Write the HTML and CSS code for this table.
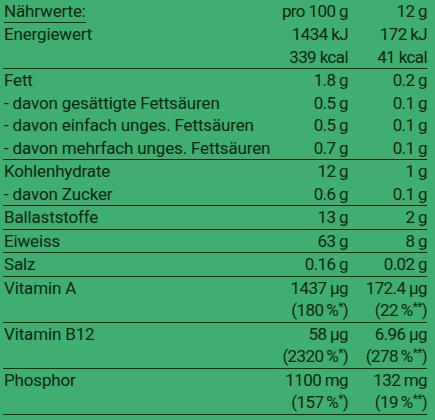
FILE: index.html
```html
<!DOCTYPE html>
<html lang="de">
<head>
<meta charset="utf-8">
<title>Nährwerte</title>
<link rel="stylesheet" href="styles.css">
</head>
<body>
<table class="nutri">
  <colgroup>
    <col class="c-name">
    <col class="c-100">
    <col class="c-portion">
  </colgroup>
  <tbody class="head">
    <tr><td><span class="title">Nährwerte:</span></td><td>pro 100 g</td><td>12 g</td></tr>
    <tr><td>Energiewert</td><td>1434 kJ<br>339 kcal</td><td>172 kJ<br>41 kcal</td></tr>
  </tbody>
  <tbody>
    <tr><td>Fett</td><td>1.8 g</td><td>0.2 g</td></tr>
    <tr><td>- davon gesättigte Fettsäuren</td><td>0.5 g</td><td>0.1 g</td></tr>
    <tr><td>- davon einfach unges. Fettsäuren</td><td>0.5 g</td><td>0.1 g</td></tr>
    <tr><td>- davon mehrfach unges. Fettsäuren</td><td>0.7 g</td><td>0.1 g</td></tr>
  </tbody>
  <tbody>
    <tr><td>Kohlenhydrate</td><td>12 g</td><td>1 g</td></tr>
    <tr><td>- davon Zucker</td><td>0.6 g</td><td>0.1 g</td></tr>
  </tbody>
  <tbody>
    <tr><td>Ballaststoffe</td><td>13 g</td><td>2 g</td></tr>
  </tbody>
  <tbody>
    <tr><td>Eiweiss</td><td>63 g</td><td>8 g</td></tr>
  </tbody>
  <tbody>
    <tr><td>Salz</td><td>0.16 g</td><td>0.02 g</td></tr>
  </tbody>
  <tbody>
    <tr><td>Vitamin A</td><td>1437 µg<br>(180&#8201;%<sup>*</sup>)</td><td>172.4 µg<br>(22&#8201;%<sup>**</sup>)</td></tr>
  </tbody>
  <tbody>
    <tr><td>Vitamin B12</td><td>58 µg<br>(2320&#8201;%<sup>*</sup>)</td><td>6.96 µg<br>(278&#8201;%<sup>**</sup>)</td></tr>
  </tbody>
  <tbody>
    <tr><td>Phosphor</td><td>1100 mg<br>(157&#8201;%<sup>*</sup>)</td><td>132 mg<br>(19&#8201;%<sup>**</sup>)</td></tr>
  </tbody>
</table>
</body>
</html>
```

FILE: styles.css
```css
html, body {
  margin: 0;
  padding: 0;
  background: #3fae6e;
}

body {
  padding: 0 8px 0 3px;
  color: #0b2614;
  font-family: Roboto, "Liberation Sans", sans-serif;
  font-size: 17px;
  letter-spacing: -0.15px;
}

.nutri {
  width: 424px;
  table-layout: fixed;
  border-collapse: collapse;
}

.c-name { width: 267px; }
.c-100 { width: 78px; }
.c-portion { width: 79px; }

.nutri td {
  padding: 0;
  line-height: 22.5px;
  vertical-align: top;
  white-space: nowrap;
}

.nutri td:first-child {
  padding-left: 1px;
}

.nutri td + td {
  text-align: right;
  letter-spacing: -0.6px;
}

.nutri tbody {
  border-bottom: 1px solid #0b2614;
}

.title {
  display: inline-block;
  line-height: 22px;
  border-bottom: 1px solid #0b2614;
}

sup {
  font-size: 0.7em;
  line-height: 0;
  vertical-align: 0.45em;
}
```
